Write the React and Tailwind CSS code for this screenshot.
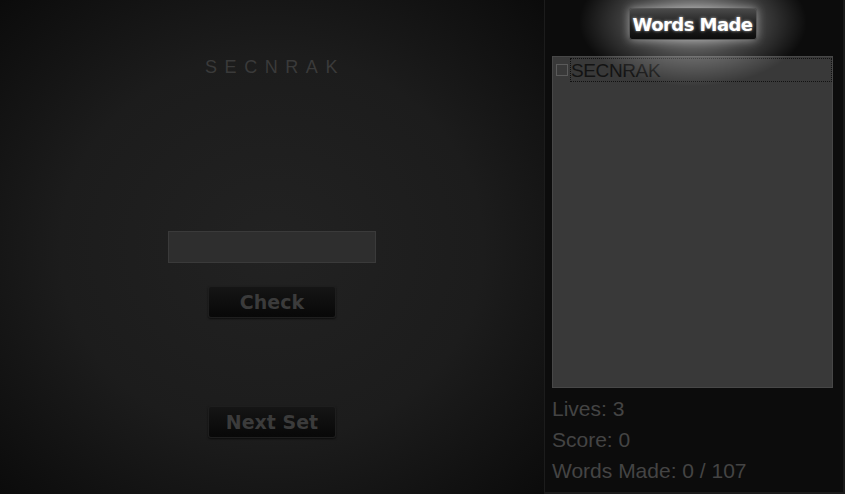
import React from "react";

const GameButton = ({ label, className = "" }) => (
  <button
    type="button"
    className={`h-[32px] w-[128px] whitespace-nowrap rounded-[3px] border border-[#1e1e1e] bg-gradient-to-b from-[#151515] to-[#080808] text-[19px] font-bold text-[#3b3b3b] shadow-[0_1px_2px_rgba(0,0,0,0.6)] ${className}`}
    style={{ fontFamily: "Verdana, 'DejaVu Sans', sans-serif" }}
  >
    {label}
  </button>
);

const App = () => {
  return (
    <div
      className="flex h-[494px] w-[845px] overflow-hidden bg-black"
      style={{ fontFamily: "'Liberation Sans', Arial, sans-serif" }}
    >
      {/* Play area */}
      <div className="flex w-[544px] flex-col items-center bg-[radial-gradient(ellipse_at_center,#222222_0%,#1c1c1c_55%,#0b0b0b_100%)]">
        <div className="mt-[54px] h-[27px] pl-[6px] text-[18px] leading-[27px] tracking-[0.42em] text-[#3a3a3a]">
          SECNRAK
        </div>
        <input
          type="text"
          className="mt-[150px] h-[32px] w-[208px] border border-[#3a3a3a] bg-[#2e2e2e] outline-none"
        />
        <GameButton label="Check" className="mt-[23px]" />
        <GameButton label="Next Set" className="mt-[88px]" />
      </div>

      {/* Side panel */}
      <div className="flex w-[301px] flex-col border-l border-[#1c1c1c] border-r-2 border-r-[#1a1a1a] border-b-2 border-b-[#1a1a1a] bg-[#0c0c0c] pl-[7px] pr-[10px]">
        <div className="relative flex h-[56px] items-center justify-center">
          <div className="absolute left-1/2 top-[22px] h-[130px] w-[230px] -translate-x-1/2 -translate-y-1/2 rounded-full bg-[radial-gradient(ellipse_at_center,rgba(255,255,255,0.6)_0%,rgba(255,255,255,0.24)_38%,rgba(255,255,255,0)_70%)]" />
          <button
            type="button"
            className="relative -mt-[8px] h-[32px] w-[128px] whitespace-nowrap rounded-[3px] border border-[#555] bg-gradient-to-b from-[#4a4a4a] via-[#222] to-[#0c0c0c] text-[18px] font-bold tracking-[-0.03em] text-white shadow-[0_0_10px_rgba(255,255,255,0.45)] [text-shadow:0_0_3px_rgba(255,255,255,0.7)]"
            style={{ fontFamily: "'DejaVu Sans', Verdana, sans-serif" }}
          >
            Words Made
          </button>
        </div>

        <div className="h-[332px] border border-[#474747] bg-[#393939] pt-[1px]">
          <div className="flex items-center">
            <span className="ml-[3px] mr-[2px] h-[12px] w-[12px] border border-[#5a5a5a]" />
            <span className="flex h-[24px] flex-1 items-center border border-dotted border-[#111] text-[19px] leading-none tracking-[-0.02em] text-[#131313]">
              SECNRAK
            </span>
          </div>
        </div>

        <div className="mt-[10px] flex flex-col gap-[9px] text-[21px] leading-[22px] text-[#444444]">
          <div>Lives: 3</div>
          <div>Score: 0</div>
          <div>Words Made: 0 / 107</div>
        </div>
      </div>
    </div>
  );
};

export default App;
